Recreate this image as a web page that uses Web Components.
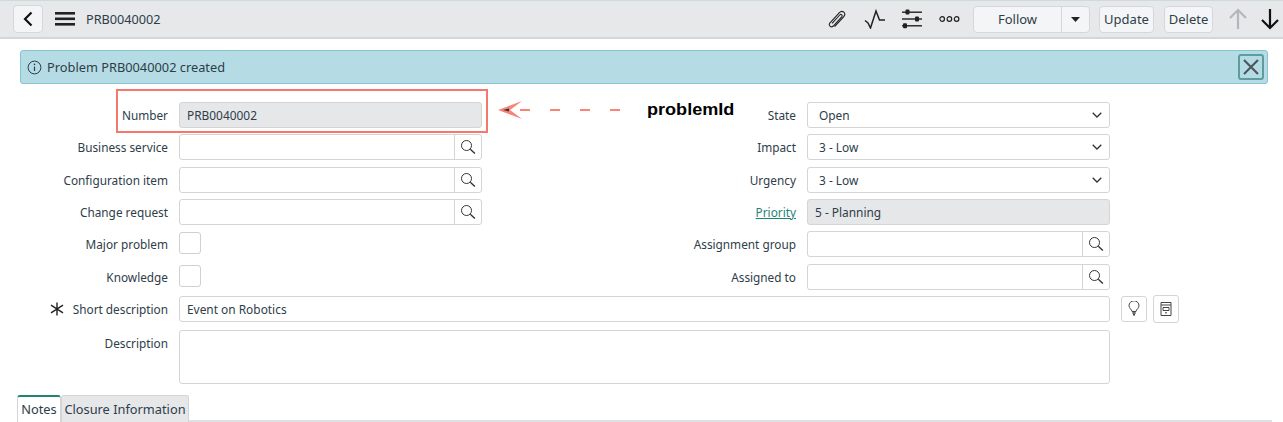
<!DOCTYPE html>
<html>
<head>
<meta charset="utf-8">
<title>PRB0040002</title>
<style>
    html, body { margin: 0; padding: 0; background: #fff; }
    body { width: 1283px; height: 422px; overflow: hidden; position: relative; font-family: "Noto Sans", "Open Sans", sans-serif; font-size: 12px; color: #2e3d49; }
</style>
</head>
<body>
<form-header title-text="PRB0040002"></form-header>
<info-alert>Problem PRB0040002 created</info-alert>
<problem-form></problem-form>
<form-tabs></form-tabs>
<field-callout></field-callout>

<script>
const SEARCH_ICON = `<svg width="16" height="16" viewBox="0 0 16 16" fill="none" stroke="#333"><circle cx="6.5" cy="6.5" r="5" stroke-width="1"/><path d="M10.3 10.3l4.6 4.2" stroke-width="1.4"/></svg>`;

// Top toolbar
class FormHeader extends HTMLElement {
    constructor() {
        super();
        this.attachShadow({ mode: 'open' });
        this.shadowRoot.innerHTML = `
            <style>
                :host { display: flex; align-items: center; box-sizing: border-box; height: 39px; background: #e6e8ea; border-top: 1px solid #cfdadc; border-bottom: 2px solid #d4d6d8; padding-left: 13px; }
                .back { box-sizing: border-box; width: 30px; height: 28px; background: #f4f5f6; border: 1px solid #d5d7d9; border-radius: 4px; display: flex; align-items: center; justify-content: center; }
                .menu { margin-left: 12px; display: flex; }
                .title { margin-left: 11px; font-size: 12.7px; color: #2e3d49; }
                .actions { margin-left: auto; display: flex; align-items: center; }
                .ico { display: flex; }
                .btn { box-sizing: border-box; height: 27px; background: #f4f5f6; border: 1px solid #d5d7d9; border-radius: 4px; font-size: 13px; color: #2e3d49; display: flex; align-items: center; justify-content: center; }
                .follow { width: 117px; margin-left: 13px; padding: 0; display: flex; }
                .follow span { flex: 1; text-align: center; }
                .caret { width: 27px; height: 100%; border-left: 1px solid #d5d7d9; display: flex; align-items: center; justify-content: center; }
                .update { width: 55px; margin-left: 9px; }
                .delete { width: 49px; margin-left: 10px; }
            </style>
            <div class="back"><svg width="12" height="18" viewBox="0 0 12 18" fill="none" stroke="#111" stroke-width="2.2"><path d="M9.5 2.5L3 9l6.5 6.5"/></svg></div>
            <div class="menu"><svg width="20" height="16" viewBox="0 0 20 16" fill="#222"><rect y="1" width="20" height="2.6"/><rect y="6.5" width="20" height="2.6"/><rect y="12" width="20" height="2.6"/></svg></div>
            <div class="title">${this.getAttribute('title-text')}</div>
            <div class="actions">
                <span class="ico" style="margin-right:16px"><svg width="22" height="22" viewBox="0 0 22 22" fill="none" stroke="#222" stroke-width="1.1"><path d="M8.6 18.6l9-9.8c1.5-1.7 1.4-3.5.2-4.6s-3-1.1-4.4.4L4 14.8c-1 1.1-1 2.5 0 3.4s2.3.8 3.3-.2l8.4-9.2c.6-.7.6-1.5 0-2s-1.4-.5-2 .2l-7.6 8.3"/></svg></span>
                <span class="ico" style="margin-right:16px"><svg width="22" height="20" viewBox="0 0 22 20" fill="none" stroke="#222" stroke-width="1.5"><path d="M1 11.5l3 2.5 2.5 5L12 2l3.5 9H21"/></svg></span>
                <span class="ico" style="margin-right:16px"><svg width="21" height="20" viewBox="0 0 21 20" fill="#222"><rect y="2.5" width="20" height="1.4"/><rect x="3.5" y="0.6" width="4" height="5" rx="1"/><rect y="9.3" width="20" height="1.4"/><rect x="13" y="7.4" width="4" height="5" rx="1"/><rect y="16.1" width="20" height="1.4"/><rect x="1" y="14.2" width="4" height="5" rx="1"/></svg></span>
                <span class="ico"><svg width="21" height="8" viewBox="0 0 21 8" fill="none" stroke="#222" stroke-width="1.2"><circle cx="3.2" cy="4" r="2.3"/><circle cx="10.4" cy="4" r="2.3"/><circle cx="17.6" cy="4" r="2.3"/></svg></span>
                <div class="btn follow"><span>Follow</span><div class="caret"><svg width="9" height="5" viewBox="0 0 9 5" fill="#222"><path d="M0 0h9L4.5 5z"/></svg></div></div>
                <div class="btn update">Update</div>
                <div class="btn delete">Delete</div>
                <span class="ico" style="margin-left:15px"><svg width="20" height="22" viewBox="0 0 20 22" fill="none" stroke="#b4b7ba" stroke-width="2.2"><path d="M10 21V2M2 10l8-8 8 8"/></svg></span>
                <span class="ico" style="margin-left:12px;margin-right:3px"><svg width="20" height="22" viewBox="0 0 20 22" fill="none" stroke="#111" stroke-width="2.2"><path d="M10 1v19M2 12l8 8 8-8"/></svg></span>
            </div>
        `;
    }
}

// Info message under the toolbar
class InfoAlert extends HTMLElement {
    constructor() {
        super();
        this.attachShadow({ mode: 'open' });
        this.shadowRoot.innerHTML = `
            <style>
                :host { display: flex; align-items: center; box-sizing: border-box; width: 1248px; height: 34px; margin: 11px 0 0 20px; background: #b5dce4; border: 1px solid #84c5d1; border-radius: 3px; padding: 0 3px 0 6px; font-size: 12.8px; color: #2e3d49; }
                .i { display: flex; margin-right: 5px; }
                .close { margin-left: auto; box-sizing: border-box; width: 26px; height: 26px; border: 2px solid #5f9d9d; border-radius: 3px; display: flex; align-items: center; justify-content: center; }
            </style>
            <span class="i"><svg width="15" height="15" viewBox="0 0 15 15" fill="none" stroke="#2e3d49"><circle cx="7.5" cy="7.5" r="6.4"/><path d="M7.5 6.6v4.4" stroke-width="1.2"/><circle cx="7.5" cy="4.4" r=".8" fill="#2e3d49" stroke="none"/></svg></span>
            <slot></slot>
            <span class="close"><svg width="18" height="18" viewBox="0 0 18 18" fill="none" stroke="#4a585f" stroke-width="2.2"><path d="M2 2l14 14M16 2L2 16"/></svg></span>
        `;
    }
}

// One label + control row. type: text, readonly, lookup, select, check, area
class FormField extends HTMLElement {
    constructor() {
        super();
        this.attachShadow({ mode: 'open' });
        const label = this.getAttribute('label');
        const type = this.getAttribute('type') || 'text';
        const value = this.getAttribute('value') || '';
        let control = '';
        if (type === 'lookup') {
            control = `<div class="box lookup"><span class="fill"></span><span class="mag">${SEARCH_ICON}</span></div>`;
        } else if (type === 'select') {
            control = `<div class="box select"><span class="fill">${value}</span><svg width="10" height="6" viewBox="0 0 10 6" fill="none" stroke="#333" stroke-width="1.3"><path d="M.7.7L5 5 9.3.7"/></svg></div>`;
        } else if (type === 'check') {
            control = `<div class="check"></div>`;
        } else {
            control = `<div class="box ${type}"><span class="fill">${value}</span></div>`;
        }
        const req = this.hasAttribute('required') ? `<svg class="req" width="14" height="14" viewBox="0 0 14 14" fill="none" stroke="#222" stroke-width="1.4"><path d="M7 .5v13M1 3.2l12 7.6M13 3.2L1 10.8"/></svg>` : '';
        const text = this.hasAttribute('link') ? `<a>${label}</a>` : label;
        this.shadowRoot.innerHTML = `
            <style>
                :host { display: grid; grid-template-columns: var(--label-w, 168px) 1fr; column-gap: 11px; font-size: 11.8px; color: #2e3d49; }
                .label { display: flex; justify-content: flex-end; align-items: center; height: 26px; white-space: nowrap; }
                a { color: #1f8476; text-decoration: underline; }
                .req { margin-right: 9px; }
                .box { box-sizing: border-box; display: flex; align-items: center; height: 26px; background: #fff; border: 1px solid #d5d5d5; border-radius: 3px; font-size: 11.9px; }
                .fill { flex: 1; padding-left: 7px; }
                .readonly { background: #e6e7e9; }
                .select .fill { padding-left: 11px; }
                .select svg { margin-right: 7px; }
                .mag { width: 26px; height: 100%; border-left: 1px solid #d5d5d5; display: flex; align-items: center; justify-content: center; }
                .area { height: 54px; }
                .check { box-sizing: border-box; width: 22px; height: 22px; margin-top: 1px; border: 1px solid #d0d0d0; border-radius: 3px; }
            </style>
            <div class="label">${req}${text}</div>
            ${control}
        `;
    }
}

// The problem record form
class ProblemForm extends HTMLElement {
    constructor() {
        super();
        this.attachShadow({ mode: 'open' });
        this.shadowRoot.innerHTML = `
            <style>
                :host { display: block; margin-top: 18px; width: 1180px; }
                .cols { display: grid; grid-template-columns: 482px 628px; row-gap: 6.33px; grid-auto-rows: 26px; }
                .right { --label-w: 314px; }
                .short { display: flex; align-items: center; height: 26px; margin-top: 6.33px; }
                .short form-field { width: 1110px; }
                .tool { box-sizing: border-box; width: 26px; height: 26px; margin-left: 11px; border: 1px solid #d5d5d5; border-radius: 3px; display: flex; align-items: center; justify-content: center; }
                .tool + .tool { margin-left: 6px; height: 28px; }
                .desc { width: 1110px; margin-top: 8px; }
            </style>
            <div class="cols">
                <form-field label="Number" type="readonly" value="PRB0040002"></form-field>
                <form-field class="right" label="State" type="select" value="Open"></form-field>
                <form-field label="Business service" type="lookup"></form-field>
                <form-field class="right" label="Impact" type="select" value="3 - Low"></form-field>
                <form-field label="Configuration item" type="lookup"></form-field>
                <form-field class="right" label="Urgency" type="select" value="3 - Low"></form-field>
                <form-field label="Change request" type="lookup"></form-field>
                <form-field class="right" label="Priority" link type="readonly" value="5 - Planning"></form-field>
                <form-field label="Major problem" type="check"></form-field>
                <form-field class="right" label="Assignment group" type="lookup"></form-field>
                <form-field label="Knowledge" type="check"></form-field>
                <form-field class="right" label="Assigned to" type="lookup"></form-field>
            </div>
            <div class="short">
                <form-field label="Short description" required value="Event on Robotics"></form-field>
                <div class="tool"><svg width="12" height="15" viewBox="0 0 12 15" fill="none" stroke="#444" stroke-width="1"><path d="M4 10.5C3.8 8.3 1 7.3 1 4.8a5 5 0 0 1 10 0c0 2.5-2.8 3.5-3 5.7z"/><path d="M4.3 12h3.4M5 13.8h2" stroke-width="1.4"/></svg></div>
                <div class="tool"><svg width="12" height="15" viewBox="0 0 12 15" fill="none" stroke="#444" stroke-width="1"><path d="M1 1.5h10v13H1z"/><path d="M1 4h10"/><path d="M3 6.5h6v3H3z"/><path d="M6 11v1.5" stroke-width="1.4"/></svg></div>
            </div>
            <form-field class="desc" label="Description" type="area"></form-field>
        `;
    }
}

class FormTabs extends HTMLElement {
    constructor() {
        super();
        this.attachShadow({ mode: 'open' });
        this.shadowRoot.innerHTML = `
            <style>
                :host { display: flex; align-items: flex-end; box-sizing: border-box; width: 1255px; margin: 11px 0 0 17px; height: 27px; font-size: 12.8px; color: #2e3d49; border-bottom: 2px solid #e0e1e2; }
                .tab { box-sizing: border-box; height: 27px; margin-bottom: -2px; display: flex; align-items: center; justify-content: center; border: 1px solid #d5d5d5; border-bottom: 0; border-radius: 3px 3px 0 0; }
                .on { width: 44px; border-top: 2px solid #1f8476; background: #fff; }
                .off { width: 128px; background: #e6e7e9; }
            </style>
            <div class="tab on">Notes</div>
            <div class="tab off">Closure Information</div>
        `;
    }
}

// Red annotation drawn over the form
class FieldCallout extends HTMLElement {
    constructor() {
        super();
        this.attachShadow({ mode: 'open' });
        this.shadowRoot.innerHTML = `
            <style>
                :host { display: block; position: absolute; left: 0; top: 0; width: 100%; height: 100%; pointer-events: none; }
                .frame { position: absolute; left: 116px; top: 89px; width: 372px; height: 44px; box-sizing: border-box; border: 2px solid #f4786c; }
                svg { position: absolute; left: 498px; top: 100px; }
                .name { position: absolute; left: 647px; top: 101px; font: bold 16px/18px "Liberation Sans", Arial, sans-serif; color: #000; transform: scaleX(1.13); transform-origin: left center; }
            </style>
            <div class="frame"></div>
            <svg width="126" height="20" viewBox="0 0 126 20"><path d="M0 10L24 1 12 10 24 19z" fill="#f98279"/><path d="M5 10l6-1.5v3z" fill="#333"/><path d="M22 10h10M52 10h10M82 10h10M112 10h10" stroke="#f98279" stroke-width="2"/></svg>
            <div class="name">problemId</div>
        `;
    }
}

customElements.define('form-header', FormHeader);
customElements.define('info-alert', InfoAlert);
customElements.define('form-field', FormField);
customElements.define('problem-form', ProblemForm);
customElements.define('form-tabs', FormTabs);
customElements.define('field-callout', FieldCallout);
</script>
</body>
</html>
